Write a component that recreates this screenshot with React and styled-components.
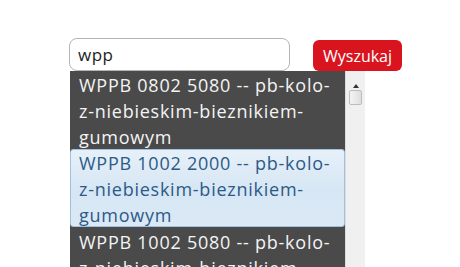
import React from 'react';
import styled, { createGlobalStyle } from 'styled-components';

const Global = createGlobalStyle`
  body {
    margin: 0;
    background: #fff;
    font-family: 'Open Sans', 'DejaVu Sans', sans-serif;
  }
`

const Page = styled.div`
  position: relative;
  width: 460px;
  height: 267px;
  overflow: hidden;
  padding: 38px 0 0 69px;
  box-sizing: border-box;
`

const SearchRow = styled.div`
  display: flex;
  align-items: flex-start;
  gap: 23px;
`

const Field = styled.div`
  position: relative;
`

const Input = styled.input`
  width: 221px;
  height: 33px;
  box-sizing: border-box;
  border: 1px solid #b4b4b4;
  border-radius: 8px;
  padding: 0 8px;
  font-family: 'Open Sans', sans-serif;
  font-size: 17px;
  letter-spacing: 0.5px;
  color: #222;
  outline: none;
`

const Button = styled.button`
  margin-top: 2px;
  width: 89px;
  height: 31px;
  border: none;
  border-radius: 6px;
  background: #d9141f;
  color: #fff;
  font-family: 'Open Sans', sans-serif;
  font-size: 16px;
  padding: 0;
`

const Menu = styled.ul`
  position: absolute;
  top: 33px;
  left: 1px;
  width: 295px;
  height: 200px;
  margin: 0;
  padding: 0;
  list-style: none;
  display: flex;
  background: #4a4a4a;
  overflow: hidden;
`

const Items = styled.div`
  flex: 1;
  display: flex;
  flex-direction: column;
`

const Item = styled.li`
  box-sizing: border-box;
  padding: 0 8px;
  font-size: 18px;
  letter-spacing: 0.75px;
  line-height: 26px;
  height: 78px;
  flex-shrink: 0;
  color: ${p => p.$active ? '#2c5a86' : '#f4f4f4'};
  background: ${p => p.$active ? 'linear-gradient(#e6f0f9, #d6e6f4 55%, #dbe9f5)' : 'transparent'};
  border: ${p => p.$active ? '1px solid #9fc0df' : '1px solid transparent'};
  border-radius: 3px;
  margin: ${p => p.$active ? '0 0 1px' : '0'};
`

const Scrollbar = styled.div`
  width: 19px;
  background: #f0f0f0;
  border-left: 1px solid #dcdcdc;
  display: flex;
  flex-direction: column;
  align-items: center;
`

const Arrow = styled.div`
  margin-top: 13px;
  width: 0;
  height: 0;
  border-left: 3px solid transparent;
  border-right: 3px solid transparent;
  border-bottom: 4px solid #333;
`

const Thumb = styled.div`
  margin-top: 2px;
  width: 13px;
  height: 15px;
  box-sizing: border-box;
  border: 1px solid #bcbcbc;
  border-radius: 2px;
  background: linear-gradient(90deg, #f4f4f4, #dedede);
`

const results = ['0802 5080', '1002 2000', '1002 5080']

export default function App() {
  return <Page>
    <Global />
    <SearchRow>
      <Field>
        <Input defaultValue="wpp" />
        <Menu>
          <Items>
            {results.map((code, i) =>
              <Item key={code} $active={i === 1}>
                {`WPPB ${code} -- pb-kolo-z-niebieskim-bieznikiem-gumowym`}
              </Item>
            )}
          </Items>
          <Scrollbar>
            <Arrow />
            <Thumb />
          </Scrollbar>
        </Menu>
      </Field>
      <Button>Wyszukaj</Button>
    </SearchRow>
  </Page>
}
